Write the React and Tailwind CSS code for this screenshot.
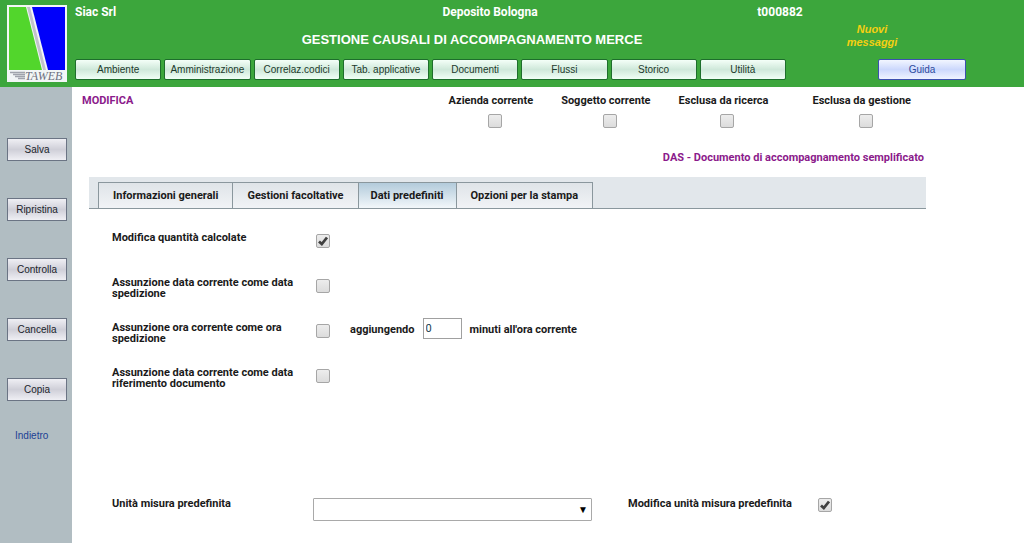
import React, { useState } from 'react';
import clsx from 'clsx';

const MENU = ['Ambiente', 'Amministrazione', 'Correlaz.codici', 'Tab. applicative', 'Documenti', 'Flussi', 'Storico', 'Utilità'];
const ACTIONS = ['Salva', 'Ripristina', 'Controlla', 'Cancella', 'Copia'];
const TABS = ['Informazioni generali', 'Gestioni facoltative', 'Dati predefiniti', 'Opzioni per la stampa'];

function Logo() {
  return (
    <svg viewBox="0 0 60 77" className="h-[77px] w-[60px]" role="img" aria-label="TAWEB">
      <rect width="60" height="77" fill="#f2f6f6" />
      <path d="M2 2H19L35 65H2Z" fill="#52d62c" />
      <path d="M25 2H58V65H41Z" fill="#0000fa" />
      <path d="M20 2H23L39 65H36Z" fill="#c2c2cc" />
      <path d="M3 67.5H18M6 69.5H18M8 71.5H18M11 73.5H18" stroke="#a0a4ac" strokeWidth="1.3" />
      <text x="18" y="75" fontFamily="Liberation Serif, serif" fontStyle="italic" fontSize="12" fill="#6c7080">
        TAWEB
      </text>
    </svg>
  );
}

// Checkbox with the grey gradient look
function Check({ id, defaultChecked, className }) {
  return (
    <span className={clsx('relative inline-block size-[14px] shrink-0', className)}>
      <input
        type="checkbox"
        id={id}
        name={id}
        defaultChecked={defaultChecked}
        className="peer block size-[14px] appearance-none rounded-[2px] border border-[#a6a6a6] bg-linear-to-b from-[#ededed] to-[#dcdcdc]"
      />
      <svg viewBox="0 0 14 14" className="pointer-events-none absolute inset-0 hidden peer-checked:block" aria-hidden="true">
        <path d="M3 7.5L5.8 10L11 3.5" fill="none" stroke="#404040" strokeWidth="2.8" />
      </svg>
    </span>
  );
}

function TopBar() {
  return (
    <header className="flex bg-[#3ca63c] pt-[5px] pb-[5px] pl-[7px] text-white">
      <Logo />
      <div className="ml-2 flex-1">
        <div className="grid grid-cols-[295fr_240fr_340fr_74fr] font-[Roboto,Arial,sans-serif] text-[12px] leading-[14px] font-bold">
          <span>Siac Srl</span>
          <span className="text-center">Deposito Bologna</span>
          <span className="text-center">t000882</span>
        </div>
        <div className="grid grid-cols-[50fr_694fr_106fr_99fr] pt-1">
          <h1 className="col-start-2 pt-[9px] text-center text-[13px] leading-[16px] font-bold">
            GESTIONE CAUSALI DI ACCOMPAGNAMENTO MERCE
          </h1>
          <a href="#messaggi" className="w-[56px] justify-self-center text-center text-[11px] leading-[13px] font-bold text-[#f5cf12] italic">
            Nuovi messaggi
          </a>
        </div>
        <div className="grid grid-cols-[711fr_92fr_88fr_58fr] pt-[10px]">
          <nav className="grid grid-cols-8 gap-[3px]">
            {MENU.map((item) => (
              <button
                key={item}
                type="button"
                className="h-[21px] rounded-[2px] border border-[#1e6e2c] bg-linear-to-b from-[#f4fff8] via-[#cfe8da] to-[#f0fff6] text-[10px] whitespace-nowrap text-[#1c3a2c]"
              >
                {item}
              </button>
            ))}
          </nav>
          <button
            type="button"
            className="col-start-3 h-[21px] rounded-[2px] border border-[#3c50b0] bg-linear-to-b from-[#f2f6ff] via-[#ccd8fc] to-[#f0f4ff] text-[10px] text-[#2c4a9c]"
          >
            Guida
          </button>
        </div>
      </div>
    </header>
  );
}

function Sidebar() {
  return (
    <aside className="flex w-[72px] shrink-0 flex-col items-start gap-[37px] bg-[#b1bdc2] pt-[51px] pl-[7px] text-[10px]">
      {ACTIONS.map((action) => (
        <button
          key={action}
          type="button"
          className="h-[23px] w-[60px] border border-[#6b7484] bg-linear-to-b from-[#efeff4] via-[#cfcfd8] to-[#efeff4] text-[#20242c]"
        >
          {action}
        </button>
      ))}
      <a href="#indietro" className="-mt-[10px] ml-2 text-[#1c3f94]">Indietro</a>
    </aside>
  );
}

function Flag({ id, label, className }) {
  return (
    <div className={clsx('flex flex-col items-center gap-2', className)}>
      <label htmlFor={id}>{label}</label>
      <Check id={id} className="ml-2" />
    </div>
  );
}

function FormRow({ id, label, defaultChecked, children }) {
  return (
    <div className="flex h-[45px] items-start">
      <label htmlFor={id} className="mr-2 w-[196px]">{label}</label>
      <Check id={id} defaultChecked={defaultChecked} className="mt-[2px]" />
      {children}
    </div>
  );
}

export default function App() {
  const [tab, setTab] = useState('Dati predefiniti');

  return (
    <div className="flex min-h-screen flex-col bg-white font-['Liberation_Sans',Arial,sans-serif]">
      <TopBar />
      <div className="flex flex-1">
        <Sidebar />
        <main className="flex-1 pr-[98px] pl-[17px] font-[Roboto,Arial,sans-serif] text-[11px] leading-[11px] font-bold text-[#1a1a1a]">
          <div className="-ml-[7px] flex justify-between pt-[8px] pr-[15px]">
            <h2 className="text-[#8b1a8b]">MODIFICA</h2>
            <div className="flex gap-7">
              <Flag id="azienda" label="Azienda corrente" />
              <Flag id="soggetto" label="Soggetto corrente" />
              <Flag id="ricerca" label="Esclusa da ricerca" />
              <Flag id="gestione" label="Esclusa da gestione" className="ml-4" />
            </div>
          </div>
          <p className="mt-6 pr-[2px] text-right text-[#8b1a8b]">DAS - Documento di accompagnamento semplificato</p>

          <div role="tablist" className="mt-[14px] flex h-8 items-end border-b border-[#8a979d] bg-[#e2e7eb] pl-[9px]">
            {TABS.map((name) => (
              <button
                key={name}
                type="button"
                role="tab"
                aria-selected={tab === name}
                onClick={() => setTab(name)}
                className={clsx(
                  'h-[26px] border-t border-l border-[#8a979d] bg-linear-to-b last:border-r',
                  tab === name ? 'from-[#b3cbdb] to-[#f2f7fa] px-3' : 'from-[#dfe4e8] to-[#f1f3f6] px-[14px]'
                )}
              >
                {name}
              </button>
            ))}
          </div>

          <form className="pt-[23px] pl-[23px]">
            <FormRow id="quantita" label="Modifica quantità calcolate" defaultChecked />
            <FormRow id="dataSpedizione" label="Assunzione data corrente come data spedizione" />
            <FormRow id="oraSpedizione" label="Assunzione ora corrente come ora spedizione">
              <label htmlFor="minuti" className="mt-[2px] ml-5">aggiungendo</label>
              <input
                id="minuti"
                type="text"
                defaultValue="0"
                className="mx-2 -mt-1 h-[21px] w-[39px] border border-[#a0a0a0] px-[2px] font-normal text-[#204050]"
              />
              <span className="mt-[2px]">minuti all'ora corrente</span>
            </FormRow>
            <FormRow id="dataDocumento" label="Assunzione data corrente come data riferimento documento" />

            <div className="mt-[86px] flex items-start">
              <label htmlFor="unita" className="mr-4 w-[185px]">Unità misura predefinita</label>
              <div className="relative">
                <select id="unita" className="h-[23px] w-[279px] appearance-none rounded-[1px] border border-[#a9a9a9] bg-white px-1 font-normal">
                  <option value=""></option>
                </select>
                <span className="pointer-events-none absolute top-[6px] right-1 text-[10px] text-black">▼</span>
              </div>
              <label htmlFor="modificaUnita" className="ml-[36px]">Modifica unità misura predefinita</label>
              <Check id="modificaUnita" defaultChecked className="ml-[26px]" />
            </div>
          </form>
        </main>
      </div>
    </div>
  );
}
